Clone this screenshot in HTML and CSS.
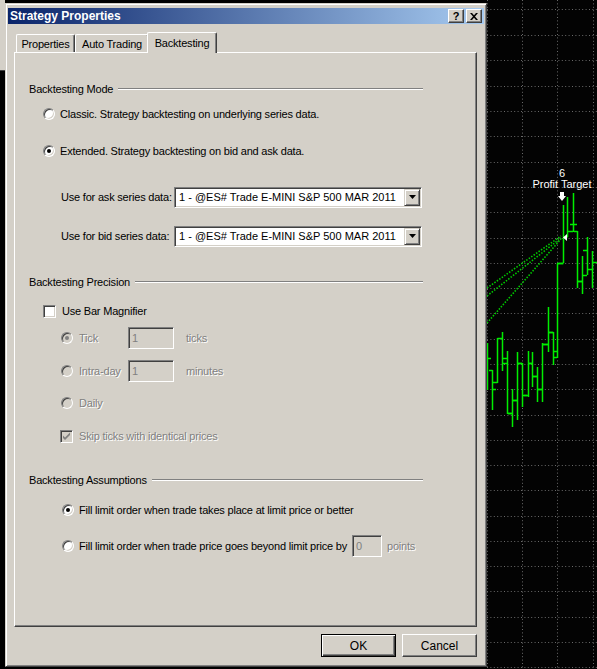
FILE: index.html
```html
<!DOCTYPE html>
<html>
<head>
<meta charset="utf-8">
<title>Strategy Properties</title>
<link rel="stylesheet" href="styles.css">
</head>
<body>
<div class="desk">
  <div class="edge"><div class="edge-win"></div></div>
  <div class="window">
    <div class="titlebar">
      <span class="title">Strategy Properties</span>
      <div class="caption-btns">
        <span class="cap cap-help">?</span>
        <span class="cap"><svg width="8" height="7" viewBox="0 0 8 7"><path d="M0 0h2l2 2.2L6 0h2L5 3.5 8 7H6L4 4.8 2 7H0l3-3.5z" fill="#000"/></svg></span>
      </div>
    </div>

    <div class="tabs">
      <div class="tab tab-props">Properties</div>
      <div class="tab tab-auto">Auto Trading</div>
      <div class="tab active">Backtesting</div>
    </div>

    <div class="panel">
      <div class="sec-title sec-mode"><span>Backtesting Mode</span><span class="etch"></span></div>
      <div class="opt row-classic"><span class="radio"></span><span>Classic. Strategy backtesting on underlying series data.</span></div>
      <div class="opt row-extended"><span class="radio checked"></span><span>Extended. Strategy backtesting on bid and ask data.</span></div>

      <div class="series row-ask">
        <span class="series-label">Use for ask series data:</span>
        <div class="combo"><span class="combo-text">1 - @ES# Trade E-MINI S&amp;P 500 MAR 2011</span><span class="combo-btn"><svg width="7" height="4" viewBox="0 0 7 4"><path d="M0 0h7L3.5 4z" fill="#000"/></svg></span></div>
      </div>
      <div class="series row-bid">
        <span class="series-label">Use for bid series data:</span>
        <div class="combo"><span class="combo-text">1 - @ES# Trade E-MINI S&amp;P 500 MAR 2011</span><span class="combo-btn"><svg width="7" height="4" viewBox="0 0 7 4"><path d="M0 0h7L3.5 4z" fill="#000"/></svg></span></div>
      </div>

      <div class="sec-title sec-prec"><span>Backtesting Precision</span><span class="etch"></span></div>
      <div class="opt row-mag"><span class="check"></span><span class="mag-text">Use Bar Magnifier</span></div>
      <div class="sub row-tick">
        <span class="radio disabled checked"></span>
        <span class="sub-label dis">Tick</span>
        <span class="field dis-field">1</span>
        <span class="unit dis">ticks</span>
      </div>
      <div class="sub row-intra">
        <span class="radio disabled"></span>
        <span class="sub-label dis">Intra-day</span>
        <span class="field dis-field">1</span>
        <span class="unit dis">minutes</span>
      </div>
      <div class="sub row-daily">
        <span class="radio disabled"></span>
        <span class="sub-label dis">Daily</span>
      </div>
      <div class="sub row-skip">
        <span class="check disabled"><svg width="11" height="11" viewBox="0 0 11 11"><path d="M2 4.5l2 2 5-5v2.6l-5 5-2-2z" fill="#808080"/></svg></span>
        <span class="dis">Skip ticks with identical prices</span>
      </div>

      <div class="sec-title sec-assume"><span>Backtesting Assumptions</span><span class="etch"></span></div>
      <div class="fill row-fill1"><span class="radio checked"></span><span>Fill limit order when trade takes place at limit price or better</span></div>
      <div class="fill row-fill2">
        <span class="radio"></span>
        <span>Fill limit order when trade price goes beyond limit price by</span>
        <span class="field small-field dis-field">0</span>
        <span class="dis">points</span>
      </div>
    </div>

    <div class="buttons">
      <div class="btn default">OK</div>
      <div class="btn">Cancel</div>
    </div>
  </div>

  <svg class="chart" width="110" height="669" viewBox="0 0 110 669">
    <path class="grid" d="M0.5 0V669M35.5 0V669M70.5 0V669M106.5 0V669"/>
    <path class="grid" d="M0 9.5H110M0 35.5H110M0 60.5H110M0 86.5H110M0 111.5H110M0 136.5H110M0 162.5H110M0 187.5H110M0 212.5H110M0 238.5H110M0 263.5H110M0 288.5H110M0 313.5H110M0 339.5H110M0 364.5H110M0 389.5H110M0 415.5H110M0 440.5H110M0 465.5H110M0 490.5H110M0 516.5H110M0 541.5H110M0 566.5H110M0 591.5H110M0 617.5H110M0 642.5H110M0 667.5H110"/>
    <g class="trend">
      <path d="M0 288L74 236"/>
      <path d="M0 296L74 238"/>
      <path d="M0 323L74 239"/>
    </g>
    <g class="bars">
      <path d="M0.5 343V390M0.5 358.5H4"/>
      <path d="M5.5 370V410M2 370.5H5.5M5.5 389.5H9"/>
      <path d="M10.5 338V383M6 382.5H10.5M10.5 338.5H15"/>
      <path d="M15.5 332V371M15.5 358.5H20"/>
      <path d="M20.5 351V414M16 363.5H20.5M20.5 413.5H25"/>
      <path d="M25.5 389V427M21 413.5H25.5M25.5 400.5H30"/>
      <path d="M30.5 352V420M26 400.5H30.5M30.5 363.5H35"/>
      <path d="M35.5 363V407M31 363.5H35.5M35.5 395.5H40"/>
      <path d="M41.5 351V397M37 395.5H41.5M41.5 363.5H45"/>
      <path d="M45.5 352V387M42 363.5H45.5M45.5 376.5H50"/>
      <path d="M50.5 367V402M46 376.5H50.5M50.5 389.5H55"/>
      <path d="M55.5 343V402M51 389.5H55.5M55.5 344.5H61"/>
      <path d="M61.5 307V352M56 344.5H61.5M61.5 332.5H66"/>
      <path d="M66.5 332V365M62 332.5H66.5M66.5 357.5H70"/>
      <path d="M70.5 263V358M67 351.5H70.5M70.5 263.5H76"/>
      <path d="M76.5 205V263M71 263.5H76.5M76.5 237.5H80"/>
      <path d="M80.5 197V237M77 237.5H80.5M80.5 231.5H86"/>
      <path d="M86.5 193V232M83 224.5H90"/>
      <path d="M90.5 231V288M87 231.5H90.5M90.5 281.5H95"/>
      <path d="M95.5 256V294M91 281.5H95.5M95.5 275.5H100"/>
      <path d="M100.5 237V275M96 250.5H100.5M100.5 269.5H105"/>
      <path d="M105.5 251V288M105.5 262.5H110"/>
    </g>
    <text class="lbl" x="75" y="177">6</text>
    <text class="lbl" x="75" y="188">Profit Target</text>
    <path d="M73 192h4v4h2l-4 5-4-5h2z" fill="#fff"/>
    <path d="M76 237.5L80 234V241z" fill="#fff"/>
  </svg>
</div>
</body>
</html>
```

FILE: styles.css
```css
html, body {
  margin: 0;
  padding: 0;
  background: #000;
}

body {
  width: 597px;
  height: 669px;
  overflow: hidden;
  font-family: "Liberation Sans", Arial, sans-serif;
  font-size: 11px;
  letter-spacing: -0.2px;
  color: #000;
}

.desk {
  display: flex;
  align-items: flex-start;
  height: 669px;
}

.edge {
  width: 5px;
  height: 669px;
  flex: none;
  background: #000;
}

.edge-win {
  height: 70px;
  background: #d4d0c8;
  border-bottom: 1px solid #404040;
}

/* window frame */
.window {
  width: 482px;
  height: 664px;
  margin-top: 3px;
  box-sizing: border-box;
  flex: none;
  background: #d4d0c8;
  border: 1px solid;
  border-color: #d4d0c8 #404040 #404040 #d4d0c8;
  box-shadow: inset 1px 1px #fff, inset -1px -1px #808080;
  padding: 4px 2px 2px 2px;
  display: flex;
  flex-direction: column;
}

.titlebar {
  height: 16px;
  display: flex;
  align-items: center;
  justify-content: space-between;
  background: linear-gradient(to right, #0a246a, #a6caf0);
  padding: 0 2px 0 2px;
}

.title {
  color: #fff;
  font-weight: bold;
  font-size: 12px;
  letter-spacing: 0;
}

.caption-btns {
  display: flex;
  gap: 2px;
}

.cap {
  width: 16px;
  height: 14px;
  box-sizing: border-box;
  background: #d4d0c8;
  border: 1px solid;
  border-color: #fff #404040 #404040 #fff;
  box-shadow: inset -1px -1px #808080;
  display: flex;
  align-items: center;
  justify-content: center;
}

.cap-help {
  font-weight: bold;
  font-size: 11px;
  line-height: 12px;
  letter-spacing: 0;
}

/* tabs */
.tabs {
  height: 20px;
  margin: 8px 0 0 6px;
  padding-left: 2px;
  display: flex;
  align-items: flex-end;
}

.tab {
  height: 18px;
  box-sizing: border-box;
  background: #d4d0c8;
  border-top: 1px solid #fff;
  border-left: 1px solid #fff;
  border-right: 1px solid #404040;
  box-shadow: inset -1px 0 #808080;
  border-radius: 2px 2px 0 0;
  display: flex;
  align-items: center;
  justify-content: center;
}

.tab-props {
  width: 59px;
}

.tab-auto {
  width: 74px;
}

.tab.active {
  position: relative;
  z-index: 1;
  width: 70px;
  height: 21px;
  margin-left: -2px;
  margin-bottom: -1px;
  padding-bottom: 1px;
}

/* panel */
.panel {
  height: 575px;
  margin: 0 7px 0 6px;
  box-sizing: border-box;
  border: 1px solid;
  border-color: #fff #404040 #404040 #fff;
  box-shadow: inset -1px -1px #808080;
  padding: 0 53px 0 14px;
  display: flex;
  flex-direction: column;
}

.sec-title {
  height: 20px;
  display: flex;
  align-items: center;
  gap: 5px;
}

.etch {
  flex: 1;
  height: 0;
  border-top: 1px solid #808080;
  border-bottom: 1px solid #fff;
}

.sec-mode { margin-top: 26px; }
.sec-prec { margin-top: 25px; }
.sec-assume { margin-top: 24px; }

.opt {
  height: 20px;
  margin-left: 14px;
  display: flex;
  align-items: center;
  gap: 5px;
}

.row-classic { margin-top: 5px; }
.row-extended { margin-top: 17px; }
.row-mag { margin-top: 9px; }
.mag-text { margin-left: 1px; }

.series {
  height: 22px;
  margin-left: 32px;
  display: flex;
  align-items: center;
}

.row-ask { margin-top: 25px; }
.row-bid { margin-top: 17px; }

.series-label {
  width: 113px;
}

.sub {
  height: 22px;
  margin-left: 32px;
  display: flex;
  align-items: center;
}

.sub .radio,
.sub .check {
  margin-right: 6px;
}

.row-tick { margin-top: 6px; }
.row-intra { margin-top: 11px; }
.row-daily { margin-top: 11px; height: 20px; }
.row-skip { margin-top: 13px; height: 20px; margin-left: 31px; }

.sub-label {
  width: 49px;
}

.unit {
  margin-left: 12px;
}

.fill {
  height: 20px;
  margin-left: 33px;
  display: flex;
  align-items: center;
  gap: 5px;
}

.row-fill1 { margin-top: 10px; }
.row-fill2 { margin-top: 15px; height: 22px; }

/* controls */
.radio {
  position: relative;
  width: 12px;
  height: 12px;
  flex: none;
  box-sizing: border-box;
  border-radius: 50%;
  background: #fff;
  border: 1px solid;
  border-color: #808080 #fff #fff #808080;
  box-shadow: inset 1px 1px #404040, inset -1px -1px #d4d0c8;
}

.radio.checked::after {
  content: "";
  position: absolute;
  left: 3px;
  top: 3px;
  width: 4px;
  height: 4px;
  border-radius: 50%;
  background: #000;
}

.radio.disabled {
  background: #d4d0c8;
}

.radio.disabled.checked::after {
  background: #808080;
}

.check {
  width: 13px;
  height: 13px;
  flex: none;
  box-sizing: border-box;
  background: #fff;
  border: 1px solid;
  border-color: #808080 #fff #fff #808080;
  box-shadow: inset 1px 1px #404040, inset -1px -1px #d4d0c8;
  display: flex;
}

.check.disabled {
  background: #d4d0c8;
}

.dis {
  color: #808080;
  text-shadow: 1px 1px 0 #fff;
}

.field {
  width: 46px;
  height: 22px;
  flex: none;
  box-sizing: border-box;
  border: 1px solid;
  border-color: #808080 #fff #fff #808080;
  box-shadow: inset 1px 1px #404040, inset -1px -1px #d4d0c8;
  padding: 0 0 0 3px;
  display: flex;
  align-items: center;
}

.small-field {
  width: 30px;
}

.dis-field {
  background: #d4d0c8;
  color: #808080;
}

.combo {
  width: 248px;
  height: 21px;
  box-sizing: border-box;
  background: #fff;
  border: 1px solid;
  border-color: #808080 #fff #fff #808080;
  box-shadow: inset 1px 1px #404040, inset -1px -1px #d4d0c8;
  padding: 1px;
  display: flex;
  align-items: center;
}

.combo-text {
  flex: 1;
  padding-left: 3px;
  letter-spacing: 0;
}

.combo-btn {
  width: 16px;
  height: 17px;
  box-sizing: border-box;
  background: #d4d0c8;
  border: 1px solid;
  border-color: #d4d0c8 #404040 #404040 #d4d0c8;
  box-shadow: inset 1px 1px #fff, inset -1px -1px #808080;
  display: flex;
  align-items: center;
  justify-content: center;
}

/* dialog buttons */
.buttons {
  margin: 7px 7px 0 0;
  display: flex;
  justify-content: flex-end;
  gap: 6px;
}

.btn {
  width: 75px;
  height: 23px;
  box-sizing: border-box;
  background: #d4d0c8;
  border: 1px solid;
  border-color: #fff #404040 #404040 #fff;
  box-shadow: inset -1px -1px #808080;
  display: flex;
  align-items: center;
  justify-content: center;
  font-size: 12px;
  letter-spacing: 0;
}

.btn.default {
  border-color: #000;
  box-shadow: inset 1px 1px #fff, inset -1px -1px #404040, inset -2px -2px #808080;
}

/* chart */
.chart {
  flex: none;
  display: block;
  background: #030303;
}

.grid {
  fill: none;
  stroke: #6a6a6a;
  stroke-width: 1;
  stroke-dasharray: 1 2.4;
}

.trend path {
  fill: none;
  stroke: #00c800;
  stroke-width: 1.6;
  stroke-dasharray: 1.5 1.5;
}

.bars path {
  fill: none;
  stroke: #00ee00;
  stroke-width: 1.5;
}

.lbl {
  fill: #fff;
  font-family: "Liberation Sans", Arial, sans-serif;
  font-size: 11px;
  letter-spacing: 0;
  text-anchor: middle;
}
```
